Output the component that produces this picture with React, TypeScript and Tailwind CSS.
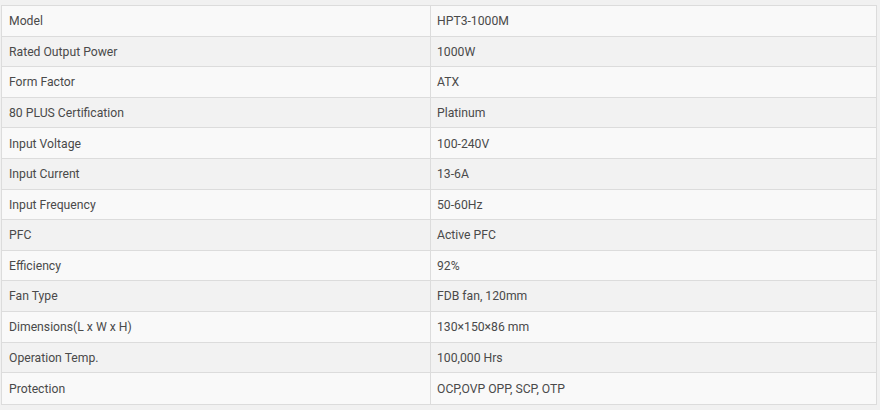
import React from "react";

const specs: [string, string][] = [
  ["Model", "HPT3-1000M"],
  ["Rated Output Power", "1000W"],
  ["Form Factor", "ATX"],
  ["80 PLUS Certification", "Platinum"],
  ["Input Voltage", "100-240V"],
  ["Input Current", "13-6A"],
  ["Input Frequency", "50-60Hz"],
  ["PFC", "Active PFC"],
  ["Efficiency", "92%"],
  ["Fan Type", "FDB fan, 120mm"],
  ["Dimensions(L x W x H)", "130×150×86 mm"],
  ["Operation Temp.", "100,000 Hrs"],
  ["Protection", "OCP,OVP OPP, SCP, OTP"],
];

const App: React.FC = () => {
  return (
    <div
      className="min-h-screen w-[880px] h-[410px] bg-[#f1f1f1] pt-[5px] pl-[1px]"
      style={{ fontFamily: "Roboto, 'Liberation Sans', sans-serif" }}
    >
      <div className="w-[876px] border border-[#dcdcdc] text-[12.2px] text-[#4a4a4a]">
        {specs.map(([label, value], i) => (
          <div
            key={label}
            className={`flex h-[30.6px] pt-px ${i < specs.length - 1 ? "border-b border-[#dcdcdc]" : ""} ${
              i % 2 === 0 ? "bg-[#f9f9f9]" : "bg-[#f2f2f2]"
            }`}
          >
            <div className="w-[429px] flex items-center pl-[7px] border-r border-[#dcdcdc] -mt-px">
              <span className="mt-px">{label}</span>
            </div>
            <div className="flex-1 flex items-center pl-[6px]">{value}</div>
          </div>
        ))}
      </div>
    </div>
  );
};

export default App;
